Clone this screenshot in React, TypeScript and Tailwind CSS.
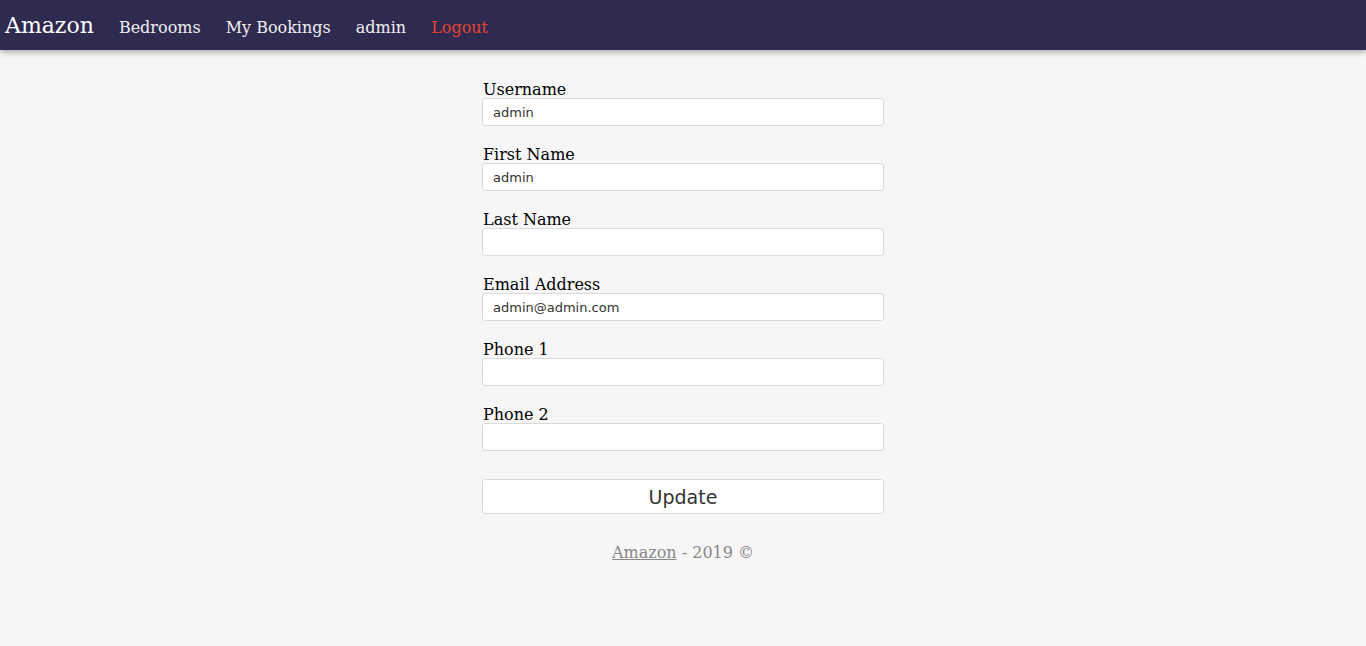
const fields = [
  { label: "Username", value: "admin" },
  { label: "First Name", value: "admin" },
  { label: "Last Name", value: "" },
  { label: "Email Address", value: "admin@admin.com" },
  { label: "Phone 1", value: "" },
  { label: "Phone 2", value: "" },
];

export default function App() {
  return (
    <div className="min-h-[646px] bg-[#f6f6f6] font-['DejaVu_Serif',serif]">
      <nav className="h-[50px] bg-[#2f2a50] flex items-center shadow-[0_2px_6px_rgba(0,0,0,0.35)]">
        <span className="ml-[5px] text-[22px] text-white">Amazon</span>
        <div className="flex items-center gap-[25px] ml-[25px] text-[16px] pt-[5px]">
          <a className="text-[#f0f0f0]">Bedrooms</a>
          <a className="text-[#f0f0f0]">My Bookings</a>
          <a className="text-[#f0f0f0]">admin</a>
          <a className="text-[#e8442f]">Logout</a>
        </div>
      </nav>
      <main className="w-[402px] mx-auto pt-[28px]">
        <form className="flex flex-col">
          {fields.map((f) => (
            <div key={f.label} className="mb-[17px]">
              <label className="block pl-[1px] pt-[4px] text-[16px] leading-[16px] text-black">{f.label}</label>
              <input
                defaultValue={f.value}
                className="block w-full h-[28px] px-[10px] bg-white border border-[#dadada] rounded-[3px] text-[13px] text-[#333] font-['DejaVu_Sans',sans-serif] outline-none"
              />
            </div>
          ))}
          <button
            type="button"
            className="mt-[11px] h-[35px] w-full pt-[2px] bg-white border border-[#dadada] rounded-[3px] text-[19px] text-[#333] font-['DejaVu_Sans',sans-serif]"
          >
            Update
          </button>
        </form>
        <p className="mt-[27px] text-center text-[16px] text-[#888]">
          <a className="underline">Amazon</a> - 2019 ©
        </p>
      </main>
    </div>
  );
}
